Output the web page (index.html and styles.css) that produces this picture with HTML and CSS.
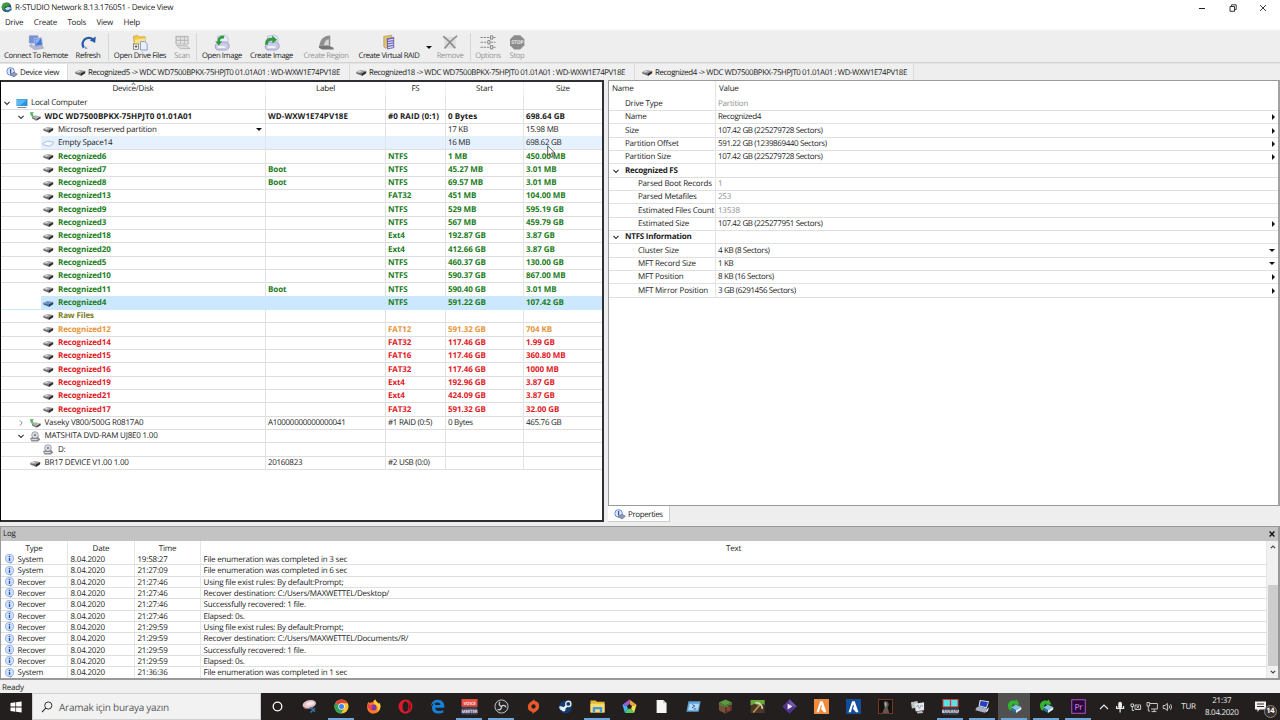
FILE: index.html
```html
<!DOCTYPE html>
<html lang="en">
  <head>
    <meta charset="UTF-8" />
    <title>R-STUDIO Network 8.13.176051 - Device View</title>
    <link rel="stylesheet" href="styles.css">
  </head>
  <body>
    <!-- shared icons -->
    <svg class="defs" width="0" height="0">
      <symbol id="drive" viewBox="0 0 12 8">
        <path d="M1 3.4 L5.5 1.4 L11.2 2.4 L7 5.2 Z" fill="#9a9a9a" />
        <path d="M1 3.4 L7 5 V7.2 L1.6 5.2 Z" fill="#707070" />
        <path d="M6.6 5 L11.2 2.4 V4.8 L7 7.4 Z" fill="#2b2b2b" />
        <path d="M2.4 3.4 L5.2 2.2 L7 2.6 L4.4 4 Z" fill="#e4e4e4" />
      </symbol>
      <symbol id="drive-sel" viewBox="0 0 12 8">
        <path d="M1 3.4 L5.5 1.4 L11.2 2.4 L7 5.2 Z" fill="#7094bd" />
        <path d="M1 3.4 L7 5 V7.2 L1.6 5.2 Z" fill="#476f98" />
        <path d="M6.6 5 L11.2 2.4 V4.8 L7 7.4 Z" fill="#1b4470" />
      </symbol>
      <symbol id="empty" viewBox="0 0 12 8">
        <path d="M1 3.6 L5.5 1.6 L11.2 2.6 V4.4 L7 6.8 L1 5.2 Z" fill="#f4f8ff" stroke="#a3b3dc" stroke-width=".8" />
      </symbol>
      <symbol id="hdd" viewBox="0 0 12 10">
        <path d="M3 5 L6.5 3.8 L11.6 5 L7.4 7.4 Z" fill="#b4b4b4" />
        <path d="M3 5 L7.4 7.4 V9.2 L3 7 Z" fill="#808080" />
        <path d="M7.4 7.4 L11.6 5 V6.8 L7.4 9.2 Z" fill="#3a3a3a" />
        <path d="M.8 .8 L5 .6 L3.8 2 L5 5.6 L2.6 5 L1.6 3.6 Z" fill="#5cba60" />
      </symbol>
      <symbol id="dvd" viewBox="0 0 12 11">
        <path d="M1 7.5 L4 5.5 H9 L11.3 8.6 L9 10.4 H2.5 Z" fill="#8a8a92" />
        <circle cx="6" cy="4" r="3.3" fill="#dcdce4" stroke="#85858f" stroke-width=".7" />
        <circle cx="6" cy="4" r="1" fill="#6f6f7c" />
        <path d="M2.5 8.6 H8.5" stroke="#eee" stroke-width=".9" />
      </symbol>
      <symbol id="pc" viewBox="0 0 12 11">
        <rect x=".5" y="1" width="11" height="7" fill="#2f92dc" />
        <path d="M1 1.4 H11 L4 7.6 H1 Z" fill="#5bb8f2" />
        <path d="M1.5 9.5 H10.5" stroke="#7b8b98" />
      </symbol>
      <symbol id="down" viewBox="0 0 8 8">
        <path d="M1.4 2.8 L4 5.4 L6.6 2.8" fill="none" stroke="#333" stroke-width="1.1" />
      </symbol>
      <symbol id="right" viewBox="0 0 8 8">
        <path d="M2.8 1.4 L5.2 4 L2.8 6.6" fill="none" stroke="#8a8a8a" stroke-width="1" />
      </symbol>
      <symbol id="info" viewBox="0 0 12 12">
        <path d="M4.5 9.5 H9 L7.8 11.8 Z" fill="#6d8fcf" />
        <circle cx="6" cy="5.4" r="4.9" fill="#cfe0fa" stroke="#7195d8" stroke-width=".8" />
        <circle cx="6" cy="3" r=".95" fill="#2456b8" />
        <path d="M6 4.6 V8.3" stroke="#2456b8" stroke-width="1.6" />
      </symbol>
      <symbol id="view" viewBox="0 0 12 11">
        <circle cx="4.6" cy="4.4" r="3.8" fill="#dfe8fa" stroke="#5f80c8" stroke-width=".9" />
        <path d="M4.6 2 V6.6" stroke="#2f56b0" stroke-width="1.3" />
        <path d="M4 7.6 L8 5.2 L11.4 7.2 L8 10 Z" fill="#8d98bd" stroke="#5a648c" stroke-width=".6" />
      </symbol>
      <symbol id="rstudio" viewBox="0 0 16 16">
        <path d="M4.5 9 L9.5 6 L15.2 8.4 L9.6 12 Z" fill="#7fc4e4" />
        <path d="M4.5 9 L9.6 12 V15 L4.5 12 Z" fill="#2c6fa8" />
        <path d="M9.6 12 L15.2 8.4 V11.2 L9.6 15 Z" fill="#e6f1f6" />
        <path d="M1.2 8 C.4 3 5 .4 9 1.9 L10.2 .4 L13.4 5.8 L7 6.4 L8 4.9 C6.2 5 5.2 6.6 5.4 9.8 L3.4 12.4 C2 11.4 1.3 9.8 1.2 8 Z" fill="#35b52f" />
      </symbol>
      <symbol id="image" viewBox="0 0 18 18">
        <path d="M4 2.5 L12 1 L15.5 4 L15 12 L5 13 Z" fill="#e8ecfa" stroke="#a5add0" stroke-width=".7" />
        <path d="M2 11.5 L6 8.5 H13.5 L16.5 11 V14.5 L13.5 17 H4 L2 15 Z" fill="#c9cce6" stroke="#8589b8" stroke-width=".7" />
        <path d="M4.5 13.8 H12.5" stroke="#fff" stroke-width="1.5" />
      </symbol>
    </svg>

    <div class="titlebar">
      <svg class="app-icon" viewBox="0 0 16 16">
        <circle cx="8" cy="7.6" r="7" fill="#35525f" />
        <path d="M1 8 C1 3 5 .8 9 1.6 L13.5 4 L7.5 6.4 C5.6 6 4.5 8 4.8 11 L2.5 11.5 Z" fill="#37a03a" />
        <path d="M5 10 L10 7 L15.4 8.8 L10 12.5 Z" fill="#c6dff0" />
        <path d="M5 10 L10 12.5 L15.4 8.8 V11.6 L10 15.4 L5 12.5 Z" fill="#2a6f97" />
      </svg>
      <span class="app-title">R-STUDIO Network 8.13.176051 - Device View</span>
      <div class="window-buttons">
        <svg viewBox="0 0 10 10"><path d="M2 5.5 H8" stroke="#222" /></svg>
        <svg viewBox="0 0 10 10"><path d="M2 3.5 H6.5 V8.3 H2 Z M3.6 3.3 V1.8 H8.2 V6.6 H6.8" fill="none" stroke="#222" stroke-width=".9" /></svg>
        <svg viewBox="0 0 10 10"><path d="M2 2 L8 8 M8 2 L2 8" stroke="#222" stroke-width=".9" /></svg>
      </div>
    </div>

    <div class="menubar">
      <span>Drive</span><span>Create</span><span>Tools</span><span>View</span><span>Help</span>
    </div>

    <div class="toolbar">
      <div class="tool w72">
        <svg viewBox="0 0 18 18">
          <path d="M2 2 H11 V9.5 H2 Z" fill="#6f93dc" stroke="#8b97c4" />
          <path d="M7 5 L15 4 L15.8 12 L8 13 Z" fill="#4576d4" stroke="#b5bfe2" />
          <path d="M8 5.8 L14 5 L9 11 Z" fill="#8fb4f3" />
          <path d="M3.5 11 L8 13.5 L15.5 12.5 L17 15 L7.5 16.5 L2 12.6 Z" fill="#b7bad8" stroke="#8d90b4" stroke-width=".6" />
        </svg>
        <span>Connect To Remote</span>
      </div>
      <div class="tool w32">
        <svg viewBox="0 0 18 18">
          <path d="M4.6 14.6 A6.4 6.4 0 1 1 15 6.6" fill="none" stroke="#2a5ca8" stroke-width="2.5" />
          <path d="M17.2 2.6 L16.6 9.4 L10.8 6.6 Z" fill="#2a5ca8" />
          <path d="M6 13 L8.6 15.4 L6 15.9 Z" fill="#5d88c6" />
        </svg>
        <span>Refresh</span>
      </div>
      <i class="sep"></i>
      <div class="tool w56">
        <svg viewBox="0 0 18 18">
          <path d="M2 2.5 L6.5 1.5 L8 3 H14.5 V9 L3 10.5 Z" fill="#f3c94b" stroke="#c39a2e" stroke-width=".7" />
          <path d="M4 6 L15 4.5 L13.5 10 L3 11 Z" fill="#fbe28c" />
          <rect x="2" y="10.6" width="5.5" height="5.5" fill="#fff" stroke="#555" stroke-width=".7" />
          <path d="M3.3 13.3 H6.3 M4.8 11.8 V14.8" stroke="#333" stroke-width=".8" />
          <path d="M9.5 8 H14 L16.6 10.4 V17 H9.5 Z" fill="#e9efff" stroke="#7d91ce" stroke-width=".9" />
        </svg>
        <span>Open Drive Files</span>
      </div>
      <div class="tool w28 off">
        <svg viewBox="0 0 18 18">
          <path d="M2 2 H16 V11 H2 Z" fill="#b9b9b9" />
          <path d="M3.5 3.5 H7 V6 H3.5 Z M8 3.5 H11 V6 H8 Z M12 3.5 H14.8 V6 H12 Z M3.5 7.5 H7 V10 H3.5 Z M8 7.5 H11 V10 H8 Z M12 7.5 H14.8 V10 H12 Z" fill="#e5e5e5" />
          <path d="M3 12 L7 15.5 H17.5 L14 12 Z" fill="#dadada" stroke="#b0b0b0" stroke-width=".8" />
        </svg>
        <span>Scan</span>
      </div>
      <i class="sep sep-b"></i>
      <div class="tool w44">
        <svg viewBox="0 0 18 18">
          <use href="#image" />
          <path d="M11.5 2 C6.5 1 3.8 4 4.4 8 L1.8 7.8 L5.8 12.2 L9 7.6 L6.8 7.8 C6.6 5.4 8 4.4 11 4.8 Z" fill="#2f9a3f" />
        </svg>
        <span>Open Image</span>
      </div>
      <div class="tool w55">
        <svg viewBox="0 0 18 18">
          <use href="#image" />
          <path d="M1.8 11.4 C1.2 6 5 3.4 9.2 4.2 V1.6 L14.4 6.2 L9.4 10 V7.2 C6.2 6.8 4.4 8 4.6 11.4 Z" fill="#2f9a3f" />
        </svg>
        <span>Create Image</span>
      </div>
      <div class="tool w54 off">
        <svg viewBox="0 0 18 18">
          <path d="M2 12.5 C2.6 6 6.5 1.6 13.5 1.6 V12.5 Z" fill="#8f8f8f" />
          <path d="M7 12 C7 9 8.8 6 12 5.6 V12 Z" fill="#d8d8d8" />
          <path d="M1.5 12.5 H12 L17 14.5 V16.5 H5 L1.5 14.5 Z" fill="#777" />
        </svg>
        <span>Create Region</span>
      </div>
      <div class="tool w72">
        <svg viewBox="0 0 18 18">
          <path d="M3.5 2.5 L12 1.2 V13 L5 15 L3.5 13.5 Z" fill="#e4c56c" stroke="#a58a45" stroke-width=".6" />
          <path d="M6.5 4.5 L14.5 3.2 V14.8 L7 16.5 Z" fill="#6f67b8" />
          <path d="M8 6.6 L13.5 5.6 M8 9.2 L13.5 8.2 M8 11.8 L13.5 10.8 M8 14.4 L13.5 13.4" stroke="#dedcf8" stroke-width="1.3" />
        </svg>
        <span>Create Virtual RAID</span>
      </div>
      <i class="drop"></i>
      <div class="tool w34 off">
        <svg viewBox="0 0 18 18">
          <path d="M3 3 H15 V15 H3 Z" fill="#dedede" />
          <path d="M1.8 2.4 C6 5.5 11 10.5 14.6 15.2 M16.6 2 C11.5 5.6 7 10.5 3.2 15.4" fill="none" stroke="#8e8e8e" stroke-width="1.8" />
        </svg>
        <span>Remove</span>
      </div>
      <i class="sep sep-c"></i>
      <div class="tool w32 off">
        <svg viewBox="0 0 18 18">
          <path d="M1 3.7 H11 M14.5 3.7 H17 M1 8.8 H8 M12 8.8 H17 M1 14 H11 M14.5 14 H17" stroke="#8a8a8a" stroke-width="1.1" stroke-dasharray="2.6 .8" />
          <path d="M11.6 1.9 H14 V5.5 H11.6 Z M8.8 7 H11.2 V10.6 H8.8 Z M11.6 12.2 H14 V15.8 H11.6 Z" fill="#eee" stroke="#777" stroke-width=".9" />
        </svg>
        <span>Options</span>
      </div>
      <div class="tool w26 off">
        <svg viewBox="0 0 18 18">
          <path d="M6 1.2 H12.4 L16.8 5.6 V12 L12.4 16.4 H6 L1.6 12 V5.6 Z" fill="#8c8c8c" />
          <text class="stop-text" x="9.2" y="11" text-anchor="middle">STOP</text>
        </svg>
        <span>Stop</span>
      </div>
    </div>

    <div class="tabs">
      <div class="tab tab-view active"><svg class="ic"><use href="#view" /></svg>Device view</div>
      <div class="tab tab-a"><svg class="ic"><use href="#drive" /></svg>Recognized5 -&gt; WDC WD7500BPKX-75HPJT0 01.01A01 : WD-WXW1E74PV18E</div>
      <div class="tab tab-b"><svg class="ic"><use href="#drive" /></svg>Recognized18 -&gt; WDC WD7500BPKX-75HPJT0 01.01A01 : WD-WXW1E74PV18E</div>
      <div class="tab tab-c"><svg class="ic"><use href="#drive" /></svg>Recognized4 -&gt; WDC WD7500BPKX-75HPJT0 01.01A01 : WD-WXW1E74PV18E</div>
    </div>

    <div class="panes">
      <div class="devices">
        <div class="row head"><span>Device/Disk<i class="sort"></i></span><span>Label</span><span>FS</span><span>Start</span><span>Size</span></div>
        <div class="row"><span class="lv0"><svg class="ar"><use href="#down" /></svg><svg class="ic"><use href="#pc" /></svg>Local Computer</span><span></span><span></span><span></span><span></span></div>
        <div class="row bold"><span class="lv1"><svg class="ar"><use href="#down" /></svg><svg class="ic"><use href="#hdd" /></svg>WDC WD7500BPKX-75HPJT0 01.01A01</span><span>WD-WXW1E74PV18E</span><span>#0 RAID (0:1)</span><span>0 Bytes</span><span>698.64 GB</span></div>
        <div class="row"><span class="lv2"><svg class="ic"><use href="#drive" /></svg>Microsoft reserved partition<i class="drop end"></i></span><span></span><span></span><span>17 KB</span><span>15.98 MB</span></div>
        <div class="row hover"><span class="lv2"><svg class="ic"><use href="#empty" /></svg>Empty Space14</span><span></span><span></span><span>16 MB</span><span>698.62 GB</span></div>
        <div class="row good"><span class="lv2"><svg class="ic"><use href="#drive" /></svg>Recognized6</span><span></span><span>NTFS</span><span>1 MB</span><span>450.00 MB</span></div>
        <div class="row good"><span class="lv2"><svg class="ic"><use href="#drive" /></svg>Recognized7</span><span>Boot</span><span>NTFS</span><span>45.27 MB</span><span>3.01 MB</span></div>
        <div class="row good"><span class="lv2"><svg class="ic"><use href="#drive" /></svg>Recognized8</span><span>Boot</span><span>NTFS</span><span>69.57 MB</span><span>3.01 MB</span></div>
        <div class="row good"><span class="lv2"><svg class="ic"><use href="#drive" /></svg>Recognized13</span><span></span><span>FAT32</span><span>451 MB</span><span>104.00 MB</span></div>
        <div class="row good"><span class="lv2"><svg class="ic"><use href="#drive" /></svg>Recognized9</span><span></span><span>NTFS</span><span>529 MB</span><span>595.19 GB</span></div>
        <div class="row good"><span class="lv2"><svg class="ic"><use href="#drive" /></svg>Recognized3</span><span></span><span>NTFS</span><span>567 MB</span><span>459.79 GB</span></div>
        <div class="row good"><span class="lv2"><svg class="ic"><use href="#drive" /></svg>Recognized18</span><span></span><span>Ext4</span><span>192.87 GB</span><span>3.87 GB</span></div>
        <div class="row good"><span class="lv2"><svg class="ic"><use href="#drive" /></svg>Recognized20</span><span></span><span>Ext4</span><span>412.66 GB</span><span>3.87 GB</span></div>
        <div class="row good"><span class="lv2"><svg class="ic"><use href="#drive" /></svg>Recognized5</span><span></span><span>NTFS</span><span>460.37 GB</span><span>130.00 GB</span></div>
        <div class="row good"><span class="lv2"><svg class="ic"><use href="#drive" /></svg>Recognized10</span><span></span><span>NTFS</span><span>590.37 GB</span><span>867.00 MB</span></div>
        <div class="row good"><span class="lv2"><svg class="ic"><use href="#drive" /></svg>Recognized11</span><span>Boot</span><span>NTFS</span><span>590.40 GB</span><span>3.01 MB</span></div>
        <div class="row good selected"><span class="lv2"><svg class="ic"><use href="#drive-sel" /></svg>Recognized4</span><span></span><span>NTFS</span><span>591.22 GB</span><span>107.42 GB</span></div>
        <div class="row raw"><span class="lv2"><svg class="ic"><use href="#drive" /></svg>Raw Files</span><span></span><span></span><span></span><span></span></div>
        <div class="row warn"><span class="lv2"><svg class="ic"><use href="#drive" /></svg>Recognized12</span><span></span><span>FAT12</span><span>591.32 GB</span><span>704 KB</span></div>
        <div class="row bad"><span class="lv2"><svg class="ic"><use href="#drive" /></svg>Recognized14</span><span></span><span>FAT32</span><span>117.46 GB</span><span>1.99 GB</span></div>
        <div class="row bad"><span class="lv2"><svg class="ic"><use href="#drive" /></svg>Recognized15</span><span></span><span>FAT16</span><span>117.46 GB</span><span>360.80 MB</span></div>
        <div class="row bad"><span class="lv2"><svg class="ic"><use href="#drive" /></svg>Recognized16</span><span></span><span>FAT32</span><span>117.46 GB</span><span>1000 MB</span></div>
        <div class="row bad"><span class="lv2"><svg class="ic"><use href="#drive" /></svg>Recognized19</span><span></span><span>Ext4</span><span>192.96 GB</span><span>3.87 GB</span></div>
        <div class="row bad"><span class="lv2"><svg class="ic"><use href="#drive" /></svg>Recognized21</span><span></span><span>Ext4</span><span>424.09 GB</span><span>3.87 GB</span></div>
        <div class="row bad"><span class="lv2"><svg class="ic"><use href="#drive" /></svg>Recognized17</span><span></span><span>FAT32</span><span>591.32 GB</span><span>32.00 GB</span></div>
        <div class="row"><span class="lv1"><svg class="ar"><use href="#right" /></svg><svg class="ic"><use href="#hdd" /></svg>Vaseky V800/500G R0817A0</span><span>A10000000000000041</span><span>#1 RAID (0:5)</span><span>0 Bytes</span><span>465.76 GB</span></div>
        <div class="row"><span class="lv1"><svg class="ar"><use href="#down" /></svg><svg class="ic"><use href="#dvd" /></svg>MATSHITA DVD-RAM UJ8E0 1.00</span><span></span><span></span><span></span><span></span></div>
        <div class="row"><span class="lv2"><svg class="ic"><use href="#dvd" /></svg>D:</span><span></span><span></span><span></span><span></span></div>
        <div class="row"><span class="lv1 leaf"><svg class="ic"><use href="#drive" /></svg>BR17 DEVICE V1.00 1.00</span><span>20160823</span><span>#2 USB (0:0)</span><span></span><span></span></div>
        <svg class="cursor" viewBox="0 0 9 14"><path d="M.7 .8 V10.6 L2.9 8.6 L4.6 12.4 L6.2 11.7 L4.6 8 H7.8 Z" fill="#fff" stroke="#333" stroke-width=".8" /></svg>
      </div>

      <div class="side">
        <div class="props">
          <div class="prop head"><span>Name</span><span>Value</span></div>
          <div class="prop dim"><span>Drive Type</span><span>Partition</span></div>
          <div class="prop"><span>Name</span><span>Recognized4<i class="more"></i></span></div>
          <div class="prop"><span>Size</span><span>107.42 GB (225279728 Sectors)<i class="more"></i></span></div>
          <div class="prop"><span>Partition Offset</span><span>591.22 GB (1239869440 Sectors)<i class="more"></i></span></div>
          <div class="prop"><span>Partition Size</span><span>107.42 GB (225279728 Sectors)<i class="more"></i></span></div>
          <div class="prop group"><span><svg class="ar"><use href="#down" /></svg>Recognized FS</span><span></span></div>
          <div class="prop sub dim"><span>Parsed Boot Records</span><span>1</span></div>
          <div class="prop sub dim"><span>Parsed Metafiles</span><span>253</span></div>
          <div class="prop sub dim"><span>Estimated Files Count</span><span>13538</span></div>
          <div class="prop sub"><span>Estimated Size</span><span>107.42 GB (225277951 Sectors)<i class="more"></i></span></div>
          <div class="prop group"><span><svg class="ar"><use href="#down" /></svg>NTFS Information</span><span></span></div>
          <div class="prop sub"><span>Cluster Size</span><span>4 KB (8 Sectors)<i class="drop end"></i></span></div>
          <div class="prop sub"><span>MFT Record Size</span><span>1 KB<i class="drop end"></i></span></div>
          <div class="prop sub"><span>MFT Position</span><span>8 KB (16 Sectors)<i class="more"></i></span></div>
          <div class="prop sub"><span>MFT Mirror Position</span><span>3 GB (6291456 Sectors)<i class="more"></i></span></div>
        </div>
        <div class="side-tab"><svg class="ic"><use href="#view" /></svg>Properties</div>
      </div>
    </div>

    <div class="log">
      <div class="log-title"><span>Log</span><svg viewBox="0 0 8 8"><path d="M1.6 1.6 L6.4 6.4 M6.4 1.6 L1.6 6.4" stroke="#111" stroke-width="1.4" /></svg></div>
      <div class="log-body">
        <div class="log-table">
          <div class="entry head"><span>Type</span><span>Date</span><span>Time</span><span>Text</span></div>
          <div class="entries">
            <div class="entry"><span><svg class="ic"><use href="#info" /></svg>System</span><span>8.04.2020</span><span>19:58:27</span><span>File enumeration was completed in 3 sec</span></div>
            <div class="entry"><span><svg class="ic"><use href="#info" /></svg>System</span><span>8.04.2020</span><span>21:27:09</span><span>File enumeration was completed in 6 sec</span></div>
            <div class="entry"><span><svg class="ic"><use href="#info" /></svg>Recover</span><span>8.04.2020</span><span>21:27:46</span><span>Using file exist rules: By default:Prompt;</span></div>
            <div class="entry"><span><svg class="ic"><use href="#info" /></svg>Recover</span><span>8.04.2020</span><span>21:27:46</span><span>Recover destination: C:/Users/MAXWETTEL/Desktop/</span></div>
            <div class="entry"><span><svg class="ic"><use href="#info" /></svg>Recover</span><span>8.04.2020</span><span>21:27:46</span><span>Successfully recovered: 1 file.</span></div>
            <div class="entry"><span><svg class="ic"><use href="#info" /></svg>Recover</span><span>8.04.2020</span><span>21:27:46</span><span>Elapsed: 0s.</span></div>
            <div class="entry"><span><svg class="ic"><use href="#info" /></svg>Recover</span><span>8.04.2020</span><span>21:29:59</span><span>Using file exist rules: By default:Prompt;</span></div>
            <div class="entry"><span><svg class="ic"><use href="#info" /></svg>Recover</span><span>8.04.2020</span><span>21:29:59</span><span>Recover destination: C:/Users/MAXWETTEL/Documents/R/</span></div>
            <div class="entry"><span><svg class="ic"><use href="#info" /></svg>Recover</span><span>8.04.2020</span><span>21:29:59</span><span>Successfully recovered: 1 file.</span></div>
            <div class="entry"><span><svg class="ic"><use href="#info" /></svg>Recover</span><span>8.04.2020</span><span>21:29:59</span><span>Elapsed: 0s.</span></div>
            <div class="entry"><span><svg class="ic"><use href="#info" /></svg>System</span><span>8.04.2020</span><span>21:36:36</span><span>File enumeration was completed in 1 sec</span></div>
          </div>
        </div>
        <div class="scrollbar">
          <svg viewBox="0 0 8 8"><path d="M1.8 5.2 L4 3 L6.2 5.2" fill="none" stroke="#444" stroke-width="1.2" /></svg>
          <div class="track"><div class="thumb"></div></div>
          <svg viewBox="0 0 8 8"><path d="M1.8 2.8 L4 5 L6.2 2.8" fill="none" stroke="#444" stroke-width="1.2" /></svg>
        </div>
      </div>
    </div>

    <div class="statusbar">Ready</div>

    <div class="taskbar">
      <div class="start">
        <svg viewBox="0 0 12 12"><path d="M.5 2 L5.4 1.3 V5.6 H.5 Z M6.1 1.2 L11.6 .4 V5.6 H6.1 Z M.5 6.4 H5.4 V10.7 L.5 10 Z M6.1 6.4 H11.6 V11.6 L6.1 10.8 Z" fill="#fff" /></svg>
      </div>
      <div class="search">
        <svg viewBox="0 0 12 12"><circle cx="7.3" cy="4.5" r="3.6" fill="none" stroke="#333" /><path d="M4.8 7.2 L1 11" stroke="#333" stroke-width="1.1" /></svg>
        <span>Aramak için buraya yazın</span>
      </div>
      <div class="apps">
        <div class="app"><svg viewBox="0 0 16 16"><circle cx="8" cy="8" r="4.6" fill="none" stroke="#fff" stroke-width="1.4" /></svg></div>
        <div class="app snip"><svg viewBox="0 0 16 16">
          <ellipse cx="7.8" cy="5.5" rx="7.2" ry="4.3" transform="rotate(-14 7.8 5.5)" fill="#e4c4c8" />
          <ellipse cx="8.6" cy="5" rx="4" ry="1.8" transform="rotate(-14 8.6 5)" fill="#f8e8ea" />
          <path d="M2 9.5 C5 11 9 10.5 12.5 8" stroke="#b4616c" fill="none" />
          <path d="M8.5 9 L14 13.5 M14 9.5 L9 14.5" stroke="#3273a8" stroke-width="1.6" />
        </svg></div>
        <div class="app run"><svg viewBox="0 0 16 16">
          <circle cx="8" cy="8" r="7.5" fill="#f6c72f" />
          <path d="M8 8 L1.5 4.2 A7.5 7.5 0 0 1 14.5 4.5 H8 Z" fill="#dd4436" />
          <path d="M8 8 L1.5 4.2 A7.5 7.5 0 0 0 7.4 15.5 L10.5 10.5 Z" fill="#34a253" />
          <circle cx="8" cy="8" r="3.5" fill="#f2f2f2" /><circle cx="8" cy="8" r="2.7" fill="#4285f4" />
        </svg></div>
        <div class="app"><svg viewBox="0 0 16 16">
          <path d="M2.5 3 L4 4.4 C5 3.4 6 3.4 7 3.6 C7.6 2 8.6 1 10 .4 C10 2.4 12.5 3.5 13.4 5 L14.5 4.2 C17 9 14 15.6 8 15.6 C2.5 15.6 -.8 9.6 2.5 3 Z" fill="#ff7b25" />
          <path d="M10 .4 C10 2.4 12.5 3.5 13.4 5 L14.5 4.2 C16.5 8 15 12 12 14 C14 9 11 6 9 5 C8 4 8.6 1 10 .4 Z" fill="#ffd23c" />
          <circle cx="8" cy="9" r="3.2" fill="#713bb6" />
          <path d="M2.2 4 C3.5 7 5 6.8 7.5 7.5 C6 9 6 10 7 11.5 C4.5 13 1 10 2.2 4 Z" fill="#f1404b" />
        </svg></div>
        <div class="app"><svg viewBox="0 0 16 16">
          <ellipse cx="8" cy="8" rx="7.4" ry="7.6" fill="#df1b2c" />
          <ellipse cx="8" cy="8" rx="3.2" ry="5.6" fill="#231f1e" />
          <path d="M11 2.4 C15 5 15 11 11 13.6 C12 10 12 6 11 2.4 Z" fill="#9d1019" />
        </svg></div>
        <div class="app"><svg viewBox="0 0 16 16">
          <path d="M1 7.4 C2 2.5 5 .8 8.6 .8 C13 .8 15.2 4.4 15.2 7.2 V9.2 H5.4 C5.6 13 10.6 13.6 14.2 11.6 V14.4 C8.5 17 1.8 15 2.2 9 C2.4 6.4 4 4.8 5.8 4.2 C5.5 4.8 5.3 5.6 5.3 6.4 H11 C11 2.8 4.5 2.8 1 7.4 Z" fill="#1482dc" />
        </svg></div>
        <div class="app run"><svg class="wide" viewBox="0 0 16 16">
          <rect width="16" height="7.8" fill="#ea4b41" /><rect y="8.2" width="16" height="7.4" fill="#3b4560" />
          <text class="vm" x="8" y="5.9" text-anchor="middle">VOICE</text>
          <text class="vm" x="8" y="13.8" text-anchor="middle">MEETER</text>
        </svg></div>
        <div class="app run"><svg viewBox="0 0 16 16">
          <circle cx="8" cy="8" r="7" fill="#27252a" stroke="#ccc" />
          <path d="M8 8 C4.8 7 5 4 6.6 3.2 M8 8 C10.4 5.6 12.8 7.4 12.6 9 M8 8 C8 11.6 5.4 12.2 3.8 11" fill="none" stroke="#ccc" stroke-width="1.4" />
        </svg></div>
        <div class="app"><svg viewBox="0 0 16 16">
          <path d="M9.5 0 C9 1 9 1.8 9.2 2.2 C13 2.4 14.6 5.6 13.8 9 C13 12.6 9.5 13.6 6.6 16 C7 15 7 14.2 6.8 13.6 C3 13.4 1.4 10.4 2.2 7 C3 3.4 6.5 2.6 9.5 0 Z" fill="#e8592b" />
          <circle cx="8" cy="8" r="2.3" fill="#231f1e" />
        </svg></div>
        <div class="app"><svg viewBox="0 0 16 16">
          <circle cx="8" cy="8.5" r="7" fill="#153a6c" />
          <path d="M1.5 8.6 L6.5 10 L10 6.5 M6 11.5 L2.5 10" stroke="#e8eef5" stroke-width="2.4" fill="none" />
          <circle cx="11" cy="5.2" r="2.8" fill="#153a6c" stroke="#e8eef5" stroke-width="1.4" />
          <circle cx="6" cy="11.3" r="2" fill="#e8eef5" />
        </svg></div>
        <div class="app run"><svg viewBox="0 0 16 16">
          <path d="M.5 1.5 H6 L7.5 3 H15.5 V14 H.5 Z" fill="#e9b72f" />
          <path d="M.5 5 H15.5 V14.5 H.5 Z" fill="#fbda72" />
          <path d="M3 8.5 H13 V14.5 H10.5 V11 H5.5 V14.5 H3 Z" fill="#3f9bdc" />
        </svg></div>
        <div class="app"><svg viewBox="0 0 16 16">
          <path d="M8 8 V.6 L15.5 6.2 Z" fill="#f2a33a" /><path d="M8 8 L15.5 6.2 L12.8 15 Z" fill="#f5e14b" />
          <path d="M8 8 L12.8 15 H3.2 Z" fill="#59c95b" /><path d="M8 8 L3.2 15 L.5 6.2 Z" fill="#41b6e8" />
          <path d="M8 8 L.5 6.2 L8 .6 Z" fill="#a35ad8" /><path d="M8 5.4 L10.7 7.4 L9.7 10.5 H6.3 L5.3 7.4 Z" fill="#231f1e" />
        </svg></div>
        <div class="app"><svg viewBox="0 0 16 16"><path d="M2.8 1 H9.8 L13.4 4.6 V15 H2.8 Z" fill="#f6f6f2" /><path d="M9.8 1 V4.6 H13.4" fill="#c9c9c4" /></svg></div>
        <div class="app"><svg viewBox="0 0 16 16">
          <path d="M2.6 2.5 H15.6 L13.5 13.5 H.5 Z" fill="#5d9fd6" /><path d="M3.8 5 H14 L12.4 12 H2.4 Z" fill="#b4d9f5" />
          <path d="M6.8 6 L9.5 7.6 L6.4 9.4 M8 10.6 H11" stroke="#2c5f9d" fill="none" />
        </svg></div>
        <div class="app"><svg viewBox="0 0 16 16">
          <path d="M8 .6 L15 3.6 L8 7 L1 3.6 Z" fill="#5f9a40" /><path d="M1 3.6 L8 7 V15.6 L1 12 Z" fill="#78513a" />
          <path d="M15 3.6 L8 7 V15.6 L15 12 Z" fill="#54352a" /><path d="M1 3.6 L8 7 L15 3.6 V6 L12 6.5 L10 9 L8 8.6 L5 8 L1 6 Z" fill="#4c7f35" /><path d="M9 9 L13 8 V12 L10 13.5 Z" fill="#913b35" />
        </svg></div>
        <div class="app"><svg viewBox="0 0 16 16">
          <rect x=".6" y="1" width="15" height="14" fill="#4a3526" /><path d="M.6 1 H15.6 V6 L12 5 L9 7 L5 5 L.6 7 Z" fill="#68a93a" />
          <path d="M3.5 14.5 L11 5.5" stroke="#c09a54" stroke-width="1.7" /><path d="M5.5 4.4 C9 3 13.4 6 13 10.5" fill="none" stroke="#e6dcc4" stroke-width="1.6" />
        </svg></div>
        <div class="app"><svg viewBox="0 0 16 16"><path d="M8 .3 L15.7 8 L8 15.7 L.3 8 Z" fill="#51348c" /><path d="M8 .3 L15.7 8 H8 Z" fill="#7456ac" /><path d="M6 4.8 L11 8 L6 11.2 Z" fill="#eee" /></svg></div>
        <div class="app"><svg viewBox="0 0 16 16"><rect width="16" height="16" fill="#f28a3c" /><path d="M6.5 2.5 H9.3 L13.3 14 H10.6 L7.6 5.5 L5.2 14 H2.7 Z M7.4 10.5 L8.5 7.4 L10.6 14 Z" fill="#fff" /></svg></div>
        <div class="app"><svg viewBox="0 0 16 16"><rect width="16" height="16" fill="#124c9b" /><path d="M6.5 2.5 H9.3 L13.3 14 H10.6 L7.6 5.5 L5.2 14 H2.7 Z M7.4 10.5 L8.5 7.4 L10.6 14 Z" fill="#fff" /></svg></div>
        <div class="app"><svg viewBox="0 0 16 16"><rect x=".5" y=".5" width="15" height="15" fill="#15110f" stroke="#7d3a24" /><path d="M6 3 C8.5 1.4 11.5 2.6 11.4 6 L10.2 9.4 L12 15 H4.5 L7 9.4 Z" fill="#5f5a56" /><path d="M8 3 C9.5 4 9.5 7 8 9 L7 5 Z" fill="#b6aca4" /></svg></div>
        <div class="app"><svg viewBox="0 0 16 16">
          <path d="M1 3.5 L8 2 L9 9 L2 10 Z" fill="#bcc4c8" /><path d="M5 5 L15 3.4 V12 L6 13 Z" fill="#e4e8ea" /><path d="M6.4 9 L8.4 6.6 L10 10 L12 6.6 L13.8 8" fill="none" stroke="#8fa0aa" /><path d="M7 13.4 L13 12.8 L14 15 L8 15.4 Z" fill="#b6bcc0" />
        </svg></div>
        <div class="app run"><svg class="wide" viewBox="0 0 16 16">
          <rect x=".5" y=".5" width="15" height="7.4" fill="#5be0ea" stroke="#cf4236" /><path d="M8 0 V8" stroke="#cf4236" stroke-width="1.4" /><rect y="9" width="16" height="6.8" fill="#2f4152" />
          <text class="vm" x="8" y="14.3" text-anchor="middle">BANANA</text>
        </svg></div>
        <div class="app run"><svg viewBox="0 0 16 16">
          <path d="M5 1 L15 2.4 L12.6 10 L3.8 7.6 Z" fill="#dfe2ee" /><path d="M6 2 L13.8 3.2 L12 8.8 L5 6.9 Z" fill="#263fc0" /><path d="M1 9.6 L4 7.8 L13 10.4 L10.4 14.6 L.6 12 Z" fill="#a9aec2" /><path d="M10.4 14.6 L13 10.4 L15 9 L13.6 13 Z" fill="#d9dcea" />
        </svg></div>
        <div class="app run current"><svg viewBox="0 0 16 16"><use href="#rstudio" /></svg></div>
        <div class="app run"><svg viewBox="0 0 16 16"><use href="#rstudio" /></svg></div>
        <div class="app run"><svg viewBox="0 0 16 16"><rect x=".8" y=".8" width="14.4" height="14.4" fill="#2b0a3a" stroke="#b55ad0" /><text class="pr" x="8" y="11.4" text-anchor="middle">Pr</text></svg></div>
      </div>
      <div class="tray">
        <svg viewBox="0 0 12 12"><path d="M2 8 L6 4 L10 8" fill="none" stroke="#eee" stroke-width="1.1" /></svg>
        <svg viewBox="0 0 12 12"><rect x="4.2" y=".8" width="3.8" height="6.6" rx="1.9" fill="#eee" /><path d="M2.6 5 V7.4 H9.6 V5 M6.1 7.8 V11.4" fill="none" stroke="#eee" stroke-width="1.2" /></svg>
        <svg viewBox="0 0 12 12"><path d="M1 3 H3.6 V5.5 H1 Z M2.3 5.5 V9.5 H4 M5 4 H10.6 V8.5 H5 Z M6.5 5 L9 7.5 M9 5 L6.5 7.5" fill="none" stroke="#d8d8d8" stroke-width=".9" /></svg>
        <svg viewBox="0 0 12 12"><path d="M4 2.5 H11.4 V8 H5 M8.2 8 V10.4 M5.5 10.6 H10.4 M1 1.5 H3.6 V5 H1 Z M2.3 5 V10 H4" fill="none" stroke="#d8d8d8" stroke-width=".9" /></svg>
        <svg viewBox="0 0 12 12"><path d="M1.2 4.5 H3 L5.4 2.4 V9.6 L3 7.5 H1.2 Z M7 4.4 Q8.2 6 7 7.6 M8.6 3.2 Q10.6 6 8.6 8.8" fill="none" stroke="#d8d8d8" stroke-width=".9" /></svg>
      </div>
      <span class="lang">TUR</span>
      <div class="clock"><span>21:37</span><span>8.04.2020</span></div>
      <div class="notify">
        <svg viewBox="0 0 14 14"><path d="M1 1.5 H12 V9.5 H5.5 L3.5 12 V9.5 H1 Z" fill="#f2f2f2" /><path d="M3 4 H10 M3 6.5 H10" stroke="#332b28" /></svg>
        <b class="count">14</b>
      </div>
    </div>
  </body>
</html>
```

FILE: styles.css
```css
* {
    box-sizing: border-box;
}

body {
    margin: 0;
    width: 1280px;
    height: 720px;
    overflow: hidden;
    display: flex;
    flex-direction: column;
    background: #eeeeee;
    color: #1c1c1c;
    font-family: "Open Sans", "Noto Sans", sans-serif;
    font-size: 8px;
    letter-spacing: -0.2px;
    line-height: 12px;
    white-space: nowrap;
    text-rendering: geometricPrecision;
}

svg {
    display: block;
    flex: none;
}

.defs {
    position: absolute;
}

.ic {
    width: 12px;
    height: 11px;
}

.ar {
    width: 8px;
    height: 8px;
}

.drop {
    width: 0;
    height: 0;
    border: 3px solid transparent;
    border-top: 3px solid #111;
    border-bottom: 0;
}

.end {
    margin-left: auto;
}

/* title and menu */
.titlebar {
    height: 15px;
    flex: none;
    display: flex;
    align-items: center;
    background: #fff;
}

.app-icon {
    width: 11px;
    height: 11px;
    margin: 0 3px 0 1px;
}

.app-title {
    padding-top: 1px;
    letter-spacing: -0.25px;
}

.window-buttons {
    margin-left: auto;
    display: flex;
    gap: 20.5px;
    padding-right: 12px;
}

.window-buttons svg {
    width: 10px;
    height: 10px;
}

.menubar {
    height: 14px;
    flex: none;
    display: flex;
    align-items: center;
    gap: 10.5px;
    padding: 1px 0 0 5px;
    background: #fff;
    letter-spacing: -0.25px;
}

/* toolbar */
.toolbar {
    height: 34px;
    flex: none;
    display: flex;
    align-items: center;
    border-top: 2px solid #f6f6f6;
    border-bottom: 1px solid #d2d2d2;
    padding: 1px 0 0;
    font-size: 7.7px;
    letter-spacing: -0.38px;
}

.tool {
    display: flex;
    flex-direction: column;
    align-items: center;
}

.tool svg {
    width: 18px;
    height: 17px;
}

.tool span {
    line-height: 10px;
}

.off {
    color: #979797;
}

.w26 { width: 26px; }
.w28 { width: 28px; }
.w32 { width: 32px; }
.w34 { width: 34px; }
.w44 { width: 44px; }
.w54 { width: 54px; }
.w55 { width: 55px; }
.w56 { width: 56px; }
.w72 { width: 72px; }

.sep {
    width: 1px;
    height: 28px;
    margin: 0 3px 0 4px;
    background: #d6d6d6;
}

.sep-b {
    margin: 0 3px 0 0;
}

.sep-c {
    margin: 0 1px 0 3px;
}

.toolbar .drop {
    margin: 0 1px;
}

.stop-text {
    font-size: 5.5px;
    font-weight: 700;
    fill: #e4e4e4;
}

/* tabs */
.tabs {
    height: 17px;
    flex: none;
    display: flex;
    border-top: 1px solid #e4e4e4;
}

.tab {
    display: flex;
    align-items: center;
    padding-top: 1px;
    border-right: 1px solid #dcdcdc;
    font-size: 7.9px;
    letter-spacing: -0.42px;
    background: #f0f0f0;
}

.tab .ic {
    margin-right: 2px;
}

.tab-view {
    width: 68px;
    padding-left: 6px;
    letter-spacing: -0.35px;
}

.tab-a {
    width: 282px;
    padding-left: 6px;
}

.tab-b {
    width: 285px;
    padding-left: 5px;
}

.tab-c {
    width: 279px;
    padding-left: 6px;
}

.active {
    background: #fff;
}

/* device list */
.panes {
    height: 443px;
    flex: none;
    display: flex;
    gap: 4px;
}

.devices {
    position: relative;
    width: 604px;
    height: 442px;
    border: 2px solid #2e2e33;
    border-left: 1px solid #000;
    background: #fff;
}

.row {
    display: grid;
    grid-template-columns: 265px 120px 60px 78px 78px;
    height: 13.333px;
}

.row > span {
    display: flex;
    align-items: center;
    padding: 1px 0 0 2px;
    border-right: 1px solid #e3e3e3;
    border-bottom: 1px solid #dedede;
}

.row > span:not(:first-child) {
    letter-spacing: -0.3px;
}

.row > span:last-child {
    border-right: 0;
}

.row.head {
    height: 14.2px;
}

.row.head > span {
    position: relative;
    justify-content: center;
    padding: 0;
    border-bottom: 0;
    border-right-color: #efefef;
    letter-spacing: -0.2px;
}

.sort {
    position: absolute;
    top: 1px;
    left: 131px;
    width: 3px;
    height: 3px;
    border: 1px solid #777;
    border-width: 1px 0 0 1px;
    transform: rotate(45deg);
}

.row > .lv0 {
    padding-left: 2px;
}

.lv0 .ic {
    margin: 0 3px 0 5px;
}

.row > .lv1 {
    padding-left: 15.5px;
}

.lv1 .ic {
    margin: 0 3.5px 0 4.5px;
}

.row > .leaf {
    padding-left: 23.5px;
}

.row > .lv2 {
    padding-left: 41px;
    padding-right: 3px;
}

.lv2 .ic {
    margin-right: 4px;
}

.bold,
.group,
.good,
.raw,
.warn,
.bad {
    font-weight: 700;
    letter-spacing: -0.12px;
}

.bold > span,
.row.bold > span:not(:first-child) {
    letter-spacing: 0.06px;
}

.good > span:not(:first-child),
.warn > span:not(:first-child),
.bad > span:not(:first-child) {
    letter-spacing: -0.08px;
}

.good {
    color: #1b7d1b;
}

.raw {
    color: #807d1c;
}

.warn {
    color: #e8953a;
}

.bad {
    color: #e01a26;
}

.hover > span {
    background: #e5f1fc;
}

.selected > span {
    background: #cce8ff;
    border-color: #cce8ff;
}

/* highlight starts at the item icon, not at the tree indent */
.hover > .lv2 {
    background: linear-gradient(to right, #fff 40px, #e5f1fc 40px);
}

.selected > .lv2 {
    background: linear-gradient(to right, #fff 40px, #cce8ff 40px);
}

.cursor {
    position: absolute;
    left: 546px;
    top: 63px;
    width: 9px;
    height: 14px;
}

/* properties */
.side {
    width: 672px;
}

.props {
    height: 426px;
    border: 1px solid #9a9a9a;
    border-right: 2px solid #a2a2a2;
    background: #fff;
}

.prop {
    display: grid;
    grid-template-columns: 107px 562px;
    height: 13.333px;
}

.prop > span {
    display: flex;
    align-items: center;
    padding: 2px 0 0 16px;
    border-bottom: 1px solid #e0e0e0;
}

.prop > span:first-child {
    border-right: 1px solid #e3e3e3;
}

.prop > span:last-child {
    padding: 2px 3px 0 2px;
    letter-spacing: -0.38px;
}

.prop.head {
    height: 15px;
}

.prop.head > span {
    border-bottom: 0;
    padding: 1px 0 0 3px;
    letter-spacing: -0.2px;
}

.prop.sub > span:first-child {
    padding-left: 29px;
}

.prop.group > span:first-child {
    padding-left: 3px;
    letter-spacing: -0.25px;
}

.group .ar {
    margin-right: 5px;
}

.prop.dim > span:last-child {
    color: #8f8f8f;
    letter-spacing: -0.2px;
}

.more {
    margin-left: auto;
    border: 3px solid transparent;
    border-left: 3px solid #111;
    border-right: 0;
}

.side-tab {
    display: flex;
    align-items: center;
    width: 62px;
    height: 16px;
    padding: 2px 0 0 6px;
    background: #fff;
    border-right: 1px solid #ccc;
    border-bottom: 1px solid #ccc;
    letter-spacing: -0.4px;
}

.side-tab .ic {
    margin-right: 2px;
}

/* log */
.log {
    height: 154px;
    flex: none;
    margin-top: 3px;
    border: 1px solid #999;
    border-right-width: 2px;
    border-bottom-width: 2px;
    display: flex;
    flex-direction: column;
    background: #fff;
}

.log-title {
    height: 14px;
    flex: none;
    display: flex;
    justify-content: space-between;
    align-items: center;
    padding: 0 2px;
    background: #c3c3c3;
}

.log-title svg {
    width: 8px;
    height: 8px;
}

.log-body {
    flex: 1;
    min-height: 0;
    display: flex;
}

.log-table {
    flex: 1;
    display: flex;
    flex-direction: column;
}

.entry {
    display: grid;
    grid-template-columns: 67px 67px 66px 1fr;
    height: 11.333px;
    line-height: 8px;
}

.entry > span {
    display: flex;
    align-items: center;
    padding: 2px 0 0 2.5px;
    border-right: 1px solid #e6e6e6;
    border-bottom: 1px solid #dedede;
}

.entry .ic {
    width: 11px;
    height: 10px;
    margin: -1px 3px 0 0;
}

.entry.head {
    height: 13px;
    flex: none;
}

.entry.head > span {
    justify-content: center;
    padding: 2px 0 0;
    border-bottom: 0;
}

/* scrolled to the end, so the oldest entry is cut by the header */
.entries {
    flex: 1;
    min-height: 0;
    overflow: hidden;
    display: flex;
    flex-direction: column;
    justify-content: flex-end;
}

.entries .entry {
    flex: none;
}

.scrollbar {
    width: 11px;
    display: flex;
    flex-direction: column;
    align-items: center;
    background: #f1f1f1;
}

.scrollbar svg {
    width: 8px;
    height: 12px;
}

.track {
    flex: 1;
    display: flex;
    align-items: flex-end;
}

.thumb {
    width: 10px;
    height: 81px;
    background: #cdcdcd;
}

.statusbar {
    height: 13px;
    flex: none;
    padding: 2px 0 0 2px;
    line-height: 11px;
    background: #f0f0f0;
}

/* taskbar */
.taskbar {
    height: 27px;
    flex: none;
    display: flex;
    align-items: stretch;
    background: #231f1e;
    color: #eee;
}

.start {
    width: 32px;
    display: flex;
    align-items: center;
    justify-content: center;
}

.start svg {
    width: 12px;
    height: 12px;
}

.search {
    width: 229px;
    display: flex;
    align-items: center;
    padding-left: 8px;
    background: #f2f2f2;
    border: 1px solid #d0d0d0;
    color: #5a5a5a;
    font-size: 10px;
    letter-spacing: -0.26px;
}

.search svg {
    width: 12px;
    height: 12px;
    margin-right: 6px;
}

.apps {
    display: flex;
}

.app {
    width: 32.05px;
    display: flex;
    align-items: center;
    justify-content: center;
}

.app svg {
    width: 15px;
    height: 15px;
}

.app .wide {
    width: 17px;
    height: 16px;
}

.run {
    background: linear-gradient(#6ea6dc, #6ea6dc) center bottom / 26px 2px no-repeat;
}

.current {
    background-color: #51504f;
}

.vm {
    font-size: 4.4px;
    font-weight: 700;
    fill: #f2dede;
    letter-spacing: -0.2px;
}

.pr {
    font-size: 9px;
    fill: #d88ff0;
}

.tray {
    display: flex;
    align-items: center;
    gap: 4px;
    padding-left: 4px;
}

.tray svg {
    width: 12px;
    height: 12px;
}

.lang {
    align-self: center;
    margin-left: 7px;
}

.clock {
    width: 46px;
    margin-left: 3px;
    display: flex;
    flex-direction: column;
    justify-content: center;
    align-items: center;
    line-height: 12px;
    letter-spacing: -0.3px;
}

.notify {
    position: relative;
    width: 34px;
    display: flex;
    align-items: center;
    padding-left: 9px;
}

.notify svg {
    width: 14px;
    height: 14px;
}

.count {
    position: absolute;
    left: 19px;
    top: 12px;
    width: 13px;
    height: 13px;
    border: 1px solid #8b8583;
    border-radius: 50%;
    background: #38302d;
    color: #fff;
    font-size: 7.5px;
    line-height: 11px;
    text-align: center;
}
```
